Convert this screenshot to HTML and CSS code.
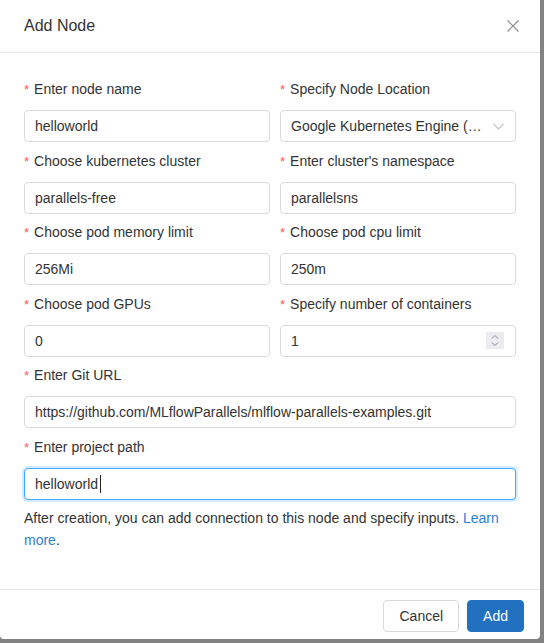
FILE: index.html
```html
<!DOCTYPE html>
<html lang="en">
<head>
<meta charset="utf-8">
<title>Add Node</title>
<link rel="stylesheet" href="styles.css">
</head>
<body>
<div class="modal">
  <div class="modal-header">
    <div class="modal-title">Add Node</div>
    <svg class="close" width="12" height="12" viewBox="0 0 12 12"><path d="M0.5 0.5 L11.5 11.5 M11.5 0.5 L0.5 11.5" stroke="#8c8c8c" stroke-width="1.2" fill="none"/></svg>
  </div>
  <div class="modal-body">
    <div class="grid">
      <div class="item">
        <label class="label"><span class="req">*</span>Enter node name</label>
        <input class="input" value="helloworld">
      </div>
      <div class="item col2">
        <label class="label"><span class="req">*</span>Specify Node Location</label>
        <div class="select">
          <span class="select-text">Google Kubernetes Engine (GKE)</span>
          <svg class="chev" width="11" height="7" viewBox="0 0 11 7"><path d="M0.5 0.8 L5.5 6 L10.5 0.8" stroke="#bfbfbf" stroke-width="1.1" fill="none"/></svg>
        </div>
      </div>
      <div class="item">
        <label class="label"><span class="req">*</span>Choose kubernetes cluster</label>
        <input class="input" value="parallels-free">
      </div>
      <div class="item col2">
        <label class="label"><span class="req">*</span>Enter cluster's namespace</label>
        <input class="input" value="parallelsns">
      </div>
      <div class="item">
        <label class="label"><span class="req">*</span>Choose pod memory limit</label>
        <input class="input" value="256Mi">
      </div>
      <div class="item col2">
        <label class="label"><span class="req">*</span>Choose pod cpu limit</label>
        <input class="input" value="250m">
      </div>
      <div class="item">
        <label class="label"><span class="req">*</span>Choose pod GPUs</label>
        <input class="input" value="0">
      </div>
      <div class="item col2">
        <label class="label"><span class="req">*</span>Specify number of containers</label>
        <div class="number">
          <span class="number-text">1</span>
          <span class="spin">
            <svg width="18" height="17" viewBox="0 0 18 17"><path d="M6 6.5 L9 3.5 L12 6.5 M6 10.5 L9 13.5 L12 10.5" stroke="#8a8a92" stroke-width="1" fill="none"/></svg>
          </span>
        </div>
      </div>
      <div class="item full">
        <label class="label"><span class="req">*</span>Enter Git URL</label>
        <input class="input" value="https://github.com/MLflowParallels/mlflow-parallels-examples.git">
      </div>
      <div class="item full">
        <label class="label"><span class="req">*</span>Enter project path</label>
        <div class="focus-wrap">
          <input class="input focused" value="helloworld">
          <span class="caret"></span>
        </div>
      </div>
    </div>
    <p class="help">After creation, you can add connection to this node and specify inputs. <a href="#" class="link">Learn more</a>.</p>
  </div>
  <div class="modal-footer">
    <button class="btn">Cancel</button>
    <button class="btn btn-primary">Add</button>
  </div>
</div>
</body>
</html>
```

FILE: styles.css
```css
* { box-sizing: border-box; }
html, body { margin: 0; padding: 0; }
body {
  background: #828282;
  font-family: "Liberation Sans", Arial, sans-serif;
  font-size: 14px;
  color: #333;
  width: 544px;
  height: 643px;
  overflow: hidden;
}
.modal {
  width: 540px;
  height: 639px;
  background: #fff;
  border-radius: 0 0 4px 4px;
  display: flex;
  flex-direction: column;
}
.modal-header {
  height: 53px;
  border-bottom: 1px solid #e8e8e8;
  display: flex;
  align-items: center;
  justify-content: space-between;
  padding: 0 21px 1px 24px;
}
.modal-title {
  font-size: 16px;
  line-height: 22px;
  color: #333;
}
.close { display: block; }
.modal-body {
  flex: 1;
  padding: 25px 24px 0 24px;
}
.grid {
  display: grid;
  grid-template-columns: minmax(0, 1fr) minmax(0, 1fr);
}
.item {
  display: flex;
  flex-direction: column;
  margin-bottom: 7.5px;
  min-width: 0;
}
.col2 { padding-left: 10px; }
.full { grid-column: 1 / 3; }
.label {
  display: block;
  height: 22px;
  line-height: 22px;
  font-size: 14px;
  color: #333;
  margin-bottom: 10px;
  white-space: nowrap;
}
.req {
  color: #ff5b5b;
  font-size: 13px;
  margin-right: 5px;
}
.input, .select, .number {
  height: 32px;
  width: 100%;
  min-width: 0;
  border: 1px solid #d9d9d9;
  border-radius: 4px;
  padding: 0 10px;
  font-family: "Liberation Sans", Arial, sans-serif;
  font-size: 14px;
  color: #333;
  background: #fff;
  outline: none;
}
.select {
  display: flex;
  align-items: center;
  padding-right: 11px;
}
.select-text {
  flex: 1;
  min-width: 0;
  white-space: nowrap;
  overflow: hidden;
  text-overflow: ellipsis;
  margin-right: 5px;
}
.chev { flex: none; display: block; }
.number {
  display: flex;
  align-items: center;
  justify-content: space-between;
  padding-right: 11px;
}
.spin {
  width: 18px;
  height: 17px;
  background: #ebebf0;
  display: block;
}
.spin svg { display: block; }
.focus-wrap { position: relative; }
.focused {
  border-color: #40a9ff;
  box-shadow: 0 0 0 2px rgba(24, 144, 255, 0.18);
}
.caret {
  position: absolute;
  left: 76px;
  top: 7px;
  width: 1px;
  height: 18px;
  background: #222;
}
.help {
  margin: 0;
  line-height: 22px;
  font-size: 14px;
  color: #333;
}
.link {
  color: #2b80d2;
  text-decoration: none;
}
.modal-footer {
  border-top: 1px solid #e8e8e8;
  padding: 10px 16px 7px;
  display: flex;
  justify-content: flex-end;
  gap: 8px;
}
.btn {
  height: 32px;
  padding: 0 15px;
  border: 1px solid #d9d9d9;
  border-radius: 4px;
  background: #fff;
  color: #333;
  font-family: "Liberation Sans", Arial, sans-serif;
  font-size: 14px;
}
.btn-primary {
  background: #2271c0;
  border-color: #2271c0;
  color: #fff;
  padding: 0 15px;
}
```
